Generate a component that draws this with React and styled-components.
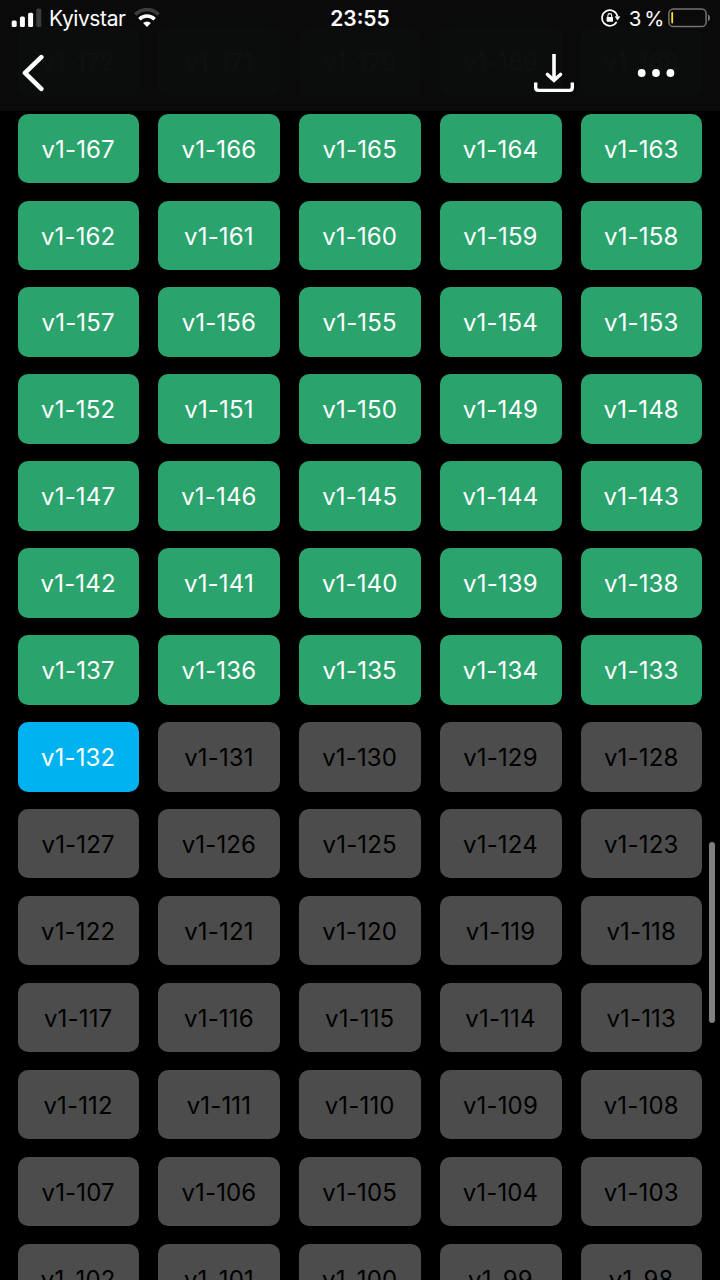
import React from "react";
import styled, { createGlobalStyle } from "styled-components";

const GlobalStyle = createGlobalStyle`
  body {
    margin: 0;
    background: #000;
    font-family: Inter, "Liberation Sans", sans-serif;
  }
`;

const tileColors = {
  done: "#2ba36d",
  current: "#00b2f0",
  locked: "#4c4c4c",
};

const Screen = styled.div`
  position: relative;
  width: 720px;
  height: 1280px;
  overflow: hidden;
  background: #000;
`;

const Header = styled.header`
  position: absolute;
  top: 0;
  left: 0;
  z-index: 1;
  width: 100%;
  height: 111px;
  background: rgba(10, 10, 10, 0.98);
`;

const StatusBar = styled.div`
  display: grid;
  grid-template-columns: 1fr auto 1fr;
  align-items: center;
  height: 36px;
  padding: 0 9px 0 11px;
  color: #fff;
`;

const StatusGroup = styled.div`
  display: flex;
  align-items: center;
  justify-content: ${({ $end }) => ($end ? "flex-end" : "flex-start")};

  svg {
    display: block;
    flex: none;
  }
`;

const Carrier = styled.span`
  margin: 0 8px 0 7px;
  padding-top: 2px;
  font-size: 21px;
  line-height: 34px;
  letter-spacing: -0.4px;
`;

const Clock = styled.time`
  margin-right: 2px;
  padding-top: 2px;
  font-size: 21px;
  font-weight: 600;
  line-height: 34px;
  letter-spacing: 0;
`;

const Charge = styled.span`
  margin: 0 4px 0 8px;
  padding-top: 2px;
  font-size: 20.5px;
  line-height: 34px;
  letter-spacing: -0.4px;
  word-spacing: -2px;
`;

const NavBar = styled.nav`
  display: flex;
  align-items: center;
  height: 74px;
  padding: 0 44px 0 20px;
`;

const NavButton = styled.button`
  display: block;
  margin: 0 0 0 ${({ $gap }) => $gap || "0"};
  padding: 0;
  border: 0;
  background: none;

  svg {
    display: block;
  }
`;

const Grid = styled.main`
  display: grid;
  grid-template-columns: repeat(5, 121.8px);
  grid-auto-rows: 69.5px;
  column-gap: 18.97px;
  row-gap: 17.43px;
  padding: 26.7px 0 0 17.5px;
`;

const Tile = styled.div`
  display: flex;
  align-items: center;
  justify-content: center;
  box-sizing: border-box;
  padding: 2.5px 0.5px 0 0;
  border-radius: 10px;
  background: ${({ $state }) => tileColors[$state]};
  color: ${({ $state }) => ($state === "locked" ? "#000" : "#fff")};
  font-size: 24px;
  line-height: 30px;
  letter-spacing: 0.15px;
`;

const Scrollbar = styled.div`
  position: absolute;
  top: 842px;
  right: 5px;
  width: 6px;
  height: 181px;
  border-radius: 3px;
  background: #808080;
`;

const SignalIcon = () => (
  <svg width="31" height="20" viewBox="0 0 31 20" fill="#fff">
    <rect x="0.7" y="12.4" width="5" height="6.6" rx="1.5" />
    <rect x="8.9" y="8.5" width="5" height="10.5" rx="1.5" />
    <rect x="17.1" y="4.7" width="5" height="14.3" rx="1.5" />
    <rect x="25.3" y="0.5" width="5" height="18.5" rx="1.5" fill="#3c3c3c" />
  </svg>
);

const WifiIcon = () => (
  <svg width="26" height="20" viewBox="0 0 26 20" fill="none" strokeWidth="3.5">
    <path d="M1.3 6.5a16.5 16.5 0 0 1 23.4 0" stroke="#3c3c3c" />
    <path d="M5.4 11.2a10.7 10.7 0 0 1 15.2 0" stroke="#fff" />
    <path d="M13 19.1l-3.9-4a5.7 5.7 0 0 1 7.8 0z" fill="#fff" />
  </svg>
);

const RotationLockIcon = () => (
  <svg width="20" height="20" viewBox="0 0 20 20" fill="none" stroke="#fff">
    <path d="M15.6 13.9a7.8 7.8 0 1 1 0.9-5.4" strokeWidth="1.7" />
    <path d="M13.9 8.6h5.2l-2.6 3.6z" fill="#fff" strokeWidth="0.3" />
    <rect x="5.6" y="9" width="6.4" height="4.8" rx="0.7" fill="#fff" stroke="none" />
    <path d="M6.9 9.4V7.5a1.9 1.9 0 0 1 3.8 0v1.9" strokeWidth="1.1" />
  </svg>
);

const BatteryIcon = () => (
  <svg width="43" height="20" viewBox="0 0 43 20" fill="none">
    <rect x="0.9" y="0.9" width="37.2" height="17.7" rx="4.4" stroke="#77736f" strokeWidth="1.5" />
    <path d="M40 6.5c2.7 1 2.7 5.8 0 6.8z" fill="#77736f" />
    <rect x="3.3" y="4" width="1.8" height="11.4" rx="0.8" fill="#ffdc22" />
  </svg>
);

const BackIcon = () => (
  <svg width="26" height="38" viewBox="0 0 26 38" fill="none">
    <path d="M21.3 3.2L5 18.9l16.3 15.9" stroke="#fff" strokeWidth="4.6" strokeLinecap="round" strokeLinejoin="round" />
  </svg>
);

const DownloadIcon = () => (
  <svg width="42" height="40" viewBox="0 0 42 40" fill="none" stroke="#fff">
    <path d="M21 1v25" strokeWidth="3.6" />
    <path d="M14.5 21.5L21 27.3l6.5-5.8" strokeWidth="3.6" strokeLinecap="round" />
    <path d="M2.7 29.6v5q0 2.8 2.8 2.8h31q2.8 0 2.8-2.8v-5" strokeWidth="3.4" />
  </svg>
);

const MoreIcon = () => (
  <svg width="40" height="10" viewBox="0 0 40 10" fill="#fff">
    <circle cx="5.7" cy="5" r="3.9" />
    <circle cx="20" cy="5" r="3.9" />
    <circle cx="34.4" cy="5" r="3.9" />
  </svg>
);

const CURRENT = 132;
const levels = Array.from({ length: 75 }, (_, i) => 172 - i);

const getState = (level) => {
  if (level === CURRENT) return "current";
  return level > CURRENT ? "done" : "locked";
};

const App = () => {
  return (
    <Screen>
      <GlobalStyle />
      <Header>
        <StatusBar>
          <StatusGroup>
            <SignalIcon />
            <Carrier>Kyivstar</Carrier>
            <WifiIcon />
          </StatusGroup>
          <Clock>23:55</Clock>
          <StatusGroup $end>
            <RotationLockIcon />
            <Charge>3 %</Charge>
            <BatteryIcon />
          </StatusGroup>
        </StatusBar>
        <NavBar>
          <NavButton aria-label="Back">
            <BackIcon />
          </NavButton>
          <NavButton aria-label="Download" $gap="auto">
            <DownloadIcon />
          </NavButton>
          <NavButton aria-label="More" $gap="61px">
            <MoreIcon />
          </NavButton>
        </NavBar>
      </Header>
      <Grid>
        {levels.map((level) => (
          <Tile key={level} $state={getState(level)}>
            v1-{level}
          </Tile>
        ))}
      </Grid>
      <Scrollbar />
    </Screen>
  );
};

export default App;
